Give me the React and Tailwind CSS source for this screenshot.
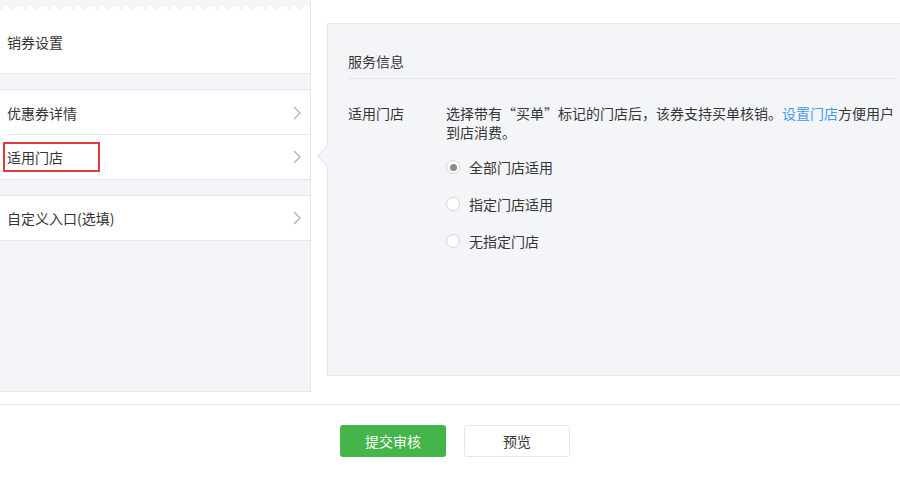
import React from 'react';

const Chevron = () => (
  <svg width="8" height="14" viewBox="0 0 8 14" className="shrink-0">
    <polyline points="1,1 7,7 1,13" fill="none" stroke="#b2b2b2" strokeWidth="1.4" />
  </svg>
);

const NavRow = ({ text, inset = false, h = 'h-[44px]' }) => (
  <div className={`relative ${h} flex items-center justify-between pl-[7px] pr-[9px]`}>
    <span>{text}</span>
    <Chevron />
    {inset && <div className="absolute left-[7px] right-0 bottom-0 h-px bg-[#e7e7eb]" />}
  </div>
);

const Radio = ({ label, checked = false }) => (
  <label className="flex items-center h-[20px] gap-[9px]">
    <span className="w-[14px] h-[14px] rounded-full border border-[#d5d5d5] bg-white flex items-center justify-center">
      {checked && <span className="w-[7px] h-[7px] rounded-full bg-[#8a8a8a]" />}
    </span>
    <span>{label}</span>
  </label>
);

export default function App() {
  return (
    <div className="w-[900px] h-[478px] bg-white overflow-hidden text-[14px] leading-[20px] text-[#353535] font-['Microsoft_YaHei','Noto_Sans_CJK_SC',sans-serif]">
      {/* main area */}
      <div className="h-[405px] flex border-b border-[#e7e7eb]">
        {/* left menu */}
        <div className="relative w-[311px] h-[392px] shrink-0 bg-[#f4f5f9] border-r border-b border-[#e7e7eb] flex flex-col">
          <div className="h-[10px] shrink-0 flex items-end">
            <div className="w-full h-[4px] bg-[radial-gradient(circle_at_50%_100%,#fff_4px,transparent_4.5px)] bg-[length:12px_4px] bg-[position:1px_0]" />
          </div>
          <div className="h-[64px] shrink-0 bg-white border-b border-[#e7e7eb] flex items-center pl-[7px]">
            销券设置
          </div>
          <div className="mt-[15px] bg-white border-y border-[#e7e7eb]">
            <NavRow text="优惠券详情" inset h="h-[45px]" />
            <NavRow text="适用门店" />
          </div>
          <div className="mt-[15px] bg-white border-y border-[#e7e7eb]">
            <NavRow text="自定义入口(选填)" />
          </div>
          {/* annotation box */}
          <div className="absolute left-[3px] top-[142px] w-[97px] h-[30px] border-2 border-[#e03a3e]" />
        </div>

        {/* right panel */}
        <div className="pl-[16px] pt-[23px]">
          <div className="relative w-[600px] h-[353px] bg-[#f4f5f9] border border-[#e4e8eb] px-[20px] pt-[27px]">
            <div className="absolute -left-[8px] top-[125px] w-[14px] h-[14px] rotate-45 bg-[#f4f5f9] border-l border-b border-[#e4e8eb]" />
            <div className="pb-[7px] border-b border-[#e4e8eb] mr-[10px]">服务信息</div>
            <div className="flex mt-[25px]">
              <div className="w-[98px] shrink-0 leading-[19px]">适用门店</div>
              <div>
                <p className="w-[450px] leading-[19px]">
                  选择带有“买单”标记的门店后，该券支持买单核销。<span className="text-[#459ae9]">设置门店</span>方便用户到店消费。
                </p>
                <div className="mt-[15px] flex flex-col gap-[17px]">
                  <Radio label="全部门店适用" checked />
                  <Radio label="指定门店适用" />
                  <Radio label="无指定门店" />
                </div>
              </div>
            </div>
          </div>
        </div>
      </div>

      {/* actions */}
      <div className="flex pl-[340px] pt-[20px] gap-[18px]">
        <button className="w-[106px] h-[32px] rounded-[3px] bg-[#44b549] text-white">提交审核</button>
        <button className="w-[106px] h-[32px] rounded-[3px] bg-white border border-[#e4e8eb]">预览</button>
      </div>
    </div>
  );
}
